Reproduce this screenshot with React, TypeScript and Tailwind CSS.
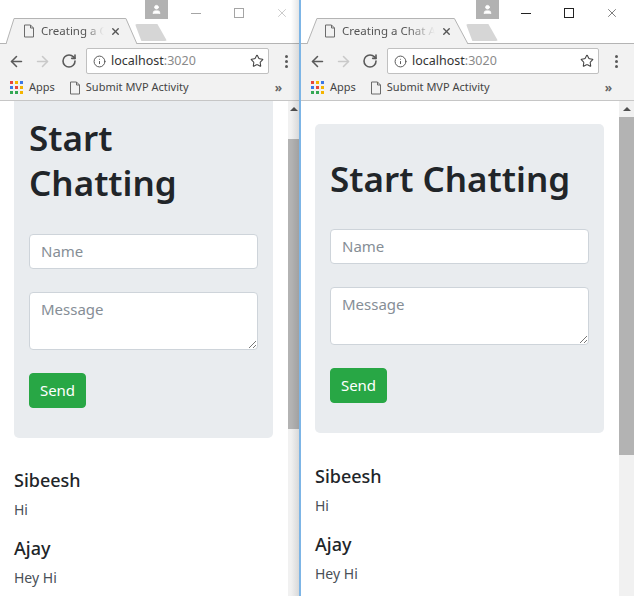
import type { ReactNode } from 'react'
import { ArrowLeft, ArrowRight, RotateCw, Info, Star, X, User } from 'lucide-react'

const font = "font-['Noto_Sans','Open_Sans',sans-serif]"

const appsColors = [
  'bg-[#e8453c]', 'bg-[#f4b400]', 'bg-[#3b78e7]',
  'bg-[#3b78e7]', 'bg-[#e8453c]', 'bg-[#f4b400]',
  'bg-[#34a853]', 'bg-[#34a853]', 'bg-[#f4b400]',
]

const PageIcon = () => (
  <svg width="12" height="14" viewBox="0 0 12 14" fill="none" stroke="#6b6b6b" strokeWidth="1" className="shrink-0">
    <path d="M1.5 1h6l3 3v9h-9z" />
    <path d="M7.5 1v3h3" />
  </svg>
)

interface ChromeProps {
  tab: string
  dim?: boolean
  tabWidth: string
  avatarRight: string
  controlsRight: string
  toolbarRight: string
  bookmarksRight: string
}

const Chrome = ({ tab, dim, tabWidth, avatarRight, controlsRight, toolbarRight, bookmarksRight }: ChromeProps) => (
  <div className="h-[101px] shrink-0 flex flex-col border-b border-[#c6c6c6]">
    <div className="h-[44px] bg-white relative flex items-end">
      <div className="absolute left-0 right-0 bottom-0 h-px bg-[#b4b4b4]" />
      <div className={`relative ${tabWidth} h-[26px] ml-[6px] flex items-center pl-[17px] pr-[16px] gap-[6px]`}>
        <svg className="absolute inset-0 w-full h-full" viewBox="0 0 130 26" preserveAspectRatio="none" fill="#f2f2f2" stroke="#b4b4b4" strokeWidth="1">
          <path d="M0 26L8 0.5H119L130 26" vectorEffect="non-scaling-stroke" />
        </svg>
        <div className="relative flex items-center gap-[6px] w-full">
          <PageIcon />
          <span className="text-[11.5px] text-[#555] whitespace-nowrap overflow-hidden flex-1 [mask-image:linear-gradient(to_right,black_70%,transparent)]">{tab}</span>
          <X size={11} strokeWidth={3} className="text-[#555] shrink-0" />
        </div>
      </div>
      <div className="relative w-[32px] h-[17px] ml-[-2px] mb-[3px] bg-[#d6d6d6] rounded-[2px] [clip-path:polygon(0_0,70%_0,100%_100%,20%_100%)]" />
      <div className={`absolute top-0 ${avatarRight} w-[23px] h-[19px] bg-[#b2b2b2] flex items-center justify-center`}>
        <User size={11} className="text-white fill-white" />
      </div>
      <div className={`absolute top-[6px] ${controlsRight} flex items-center ${dim ? 'text-[#a5a5a5]' : 'text-[#222]'}`}>
        <div className="w-[44px] flex justify-center"><div className={`w-[10px] h-px ${dim ? 'bg-[#a5a5a5]' : 'bg-[#222]'}`} /></div>
        <div className="w-[42px] flex justify-center"><div className={`w-[10px] h-[10px] border ${dim ? 'border-[#a5a5a5]' : 'border-[#222]'}`} /></div>
        <div className="w-[44px] flex justify-center"><X size={14} strokeWidth={1} /></div>
      </div>
    </div>
    <div className={`h-[34px] bg-[#f2f2f2] flex items-center pl-[8px] ${toolbarRight}`}>
      <ArrowLeft size={17} strokeWidth={2.2} className="text-[#5a5a5a] shrink-0" />
      <ArrowRight size={17} strokeWidth={2.2} className="text-[#c9c9c9] ml-[9px] shrink-0" />
      <RotateCw size={16} strokeWidth={2.4} className="text-[#5a5a5a] ml-[10px] shrink-0" />
      <div className="flex-1 h-[26px] ml-[9px] bg-white border border-[#c0c0c0] rounded-[2px] flex items-center pl-[6px] pr-[4px]">
        <Info size={13} strokeWidth={1.8} className="text-[#555] shrink-0" />
        <span className="ml-[5px] text-[12.5px] text-[#333]">localhost</span>
        <span className="text-[12.5px] text-[#8a8a8a]">:3020</span>
        <Star size={14} strokeWidth={1.8} className="ml-auto text-[#444] shrink-0" />
      </div>
      <div className="ml-[16px] flex flex-col items-center gap-[2px] shrink-0">
        <div className="w-[3px] h-[3px] rounded-full bg-[#5a5a5a]" />
        <div className="w-[3px] h-[3px] rounded-full bg-[#5a5a5a]" />
        <div className="w-[3px] h-[3px] rounded-full bg-[#5a5a5a]" />
      </div>
    </div>
    <div className={`flex-1 bg-[#f2f2f2] flex items-center pl-[10px] pb-[3px] ${bookmarksRight}`}>
      <div className="grid grid-cols-3 gap-[2px] w-[13px]">
        {appsColors.map((c, i) => <div key={i} className={`w-[3px] h-[3px] ${c}`} />)}
      </div>
      <span className="ml-[6px] text-[11px] text-[#444]">Apps</span>
      <div className="ml-[14px]"><PageIcon /></div>
      <span className="ml-[5px] text-[11px] text-[#444] whitespace-nowrap">Submit MVP Activity</span>
      <span className="ml-auto text-[12px] font-bold text-[#666]">»</span>
    </div>
  </div>
)

const Scrollbar = ({ width, thumbTop, thumbHeight }: { width: string; thumbTop: string; thumbHeight: string }) => (
  <div className={`${width} shrink-0 bg-[#f1f1f1] flex flex-col items-center`}>
    <div className="h-[16px] flex items-center justify-center">
      <div className="w-0 h-0 border-x-[4px] border-x-transparent border-b-[4px] border-b-[#505050]" />
    </div>
    <div className={`w-full ${thumbTop} ${thumbHeight} bg-[#b3b3b3]`} />
  </div>
)

const ChatForm = ({ children }: { children: ReactNode }) => (
  <>
    {children}
    <div className="mt-[29px] h-[35px] bg-white border border-[#ced4da] rounded-[4px] px-[11px] flex items-center text-[15px] text-[#868e96]">Name</div>
    <div className="mt-[23px] h-[58px] bg-white border border-[#ced4da] rounded-[4px] px-[11px] pt-[5px] text-[15px] text-[#868e96] relative">
      Message
      <svg className="absolute right-[1px] bottom-[1px]" width="8" height="8" viewBox="0 0 8 8" stroke="#777" strokeWidth="1">
        <path d="M1 8L8 1M5 8L8 5" />
      </svg>
    </div>
    <button className="mt-[23px] w-[57px] h-[35px] bg-[#28a745] border border-[#28a745] rounded-[4px] text-white text-[15px] flex items-center justify-center">Send</button>
  </>
)

const Messages = () => (
  <div className="text-[#212529]">
    <h4 className="text-[18px] leading-[22px] font-medium">Sibeesh</h4>
    <p className="mt-[8px] text-[14px] leading-[21px] text-[#495057]">Hi</p>
    <h4 className="mt-[17px] text-[18px] leading-[22px] font-medium">Ajay</h4>
    <p className="mt-[8px] text-[14px] leading-[21px] text-[#495057]">Hey Hi</p>
  </div>
)

export default function App() {
  return (
    <div className={`${font} w-[634px] h-[596px] overflow-hidden flex bg-white`}>
      <div className="w-[299px] shrink-0 flex flex-col relative">
        <Chrome
          tab="Creating a Chat App"
          dim
          tabWidth="w-[131px]"
          avatarRight="right-[131px]"
          controlsRight="right-[-5px]"
          toolbarRight="pr-[11px]"
          bookmarksRight="pr-[17px]"
        />
        <div className="flex-1 flex min-h-0">
          <div className="flex-1 pl-[14px] pr-[15px] overflow-hidden">
            <div className="bg-[#e9ecef] rounded-b-[5px] h-[337px] px-[15px] pt-[14px]">
              <ChatForm>
                <h1 className="text-[35px] leading-[45px] font-semibold text-[#212529]">Start<br />Chatting</h1>
              </ChatForm>
            </div>
            <div className="mt-[31px]"><Messages /></div>
          </div>
          <Scrollbar width="w-[11px]" thumbTop="mt-[22px]" thumbHeight="h-[290px]" />
        </div>
        <div className="absolute top-0 bottom-0 right-0 w-[8px] bg-gradient-to-r from-transparent to-black/10 pointer-events-none" />
      </div>
      <div className="w-[2px] shrink-0 bg-[#7db5e6]" />
      <div className="flex-1 min-w-0 flex flex-col">
        <Chrome
          tab="Creating a Chat App"
          tabWidth="w-[161px]"
          avatarRight="right-[135px]"
          controlsRight="right-0"
          toolbarRight="pr-[16px]"
          bookmarksRight="pr-[22px]"
        />
        <div className="flex-1 flex min-h-0">
          <div className="flex-1 pl-[14px] pr-[15px] pt-[23px] overflow-hidden">
            <div className="bg-[#e9ecef] rounded-[5px] h-[309px] px-[15px] pt-[32px]">
              <ChatForm>
                <h1 className="text-[35px] leading-[45px] mb-[-1px] font-semibold text-[#212529] whitespace-nowrap">Start Chatting</h1>
              </ChatForm>
            </div>
            <div className="mt-[32px]"><Messages /></div>
          </div>
          <Scrollbar width="w-[15px]" thumbTop="" thumbHeight="h-[338px]" />
        </div>
      </div>
    </div>
  )
}
